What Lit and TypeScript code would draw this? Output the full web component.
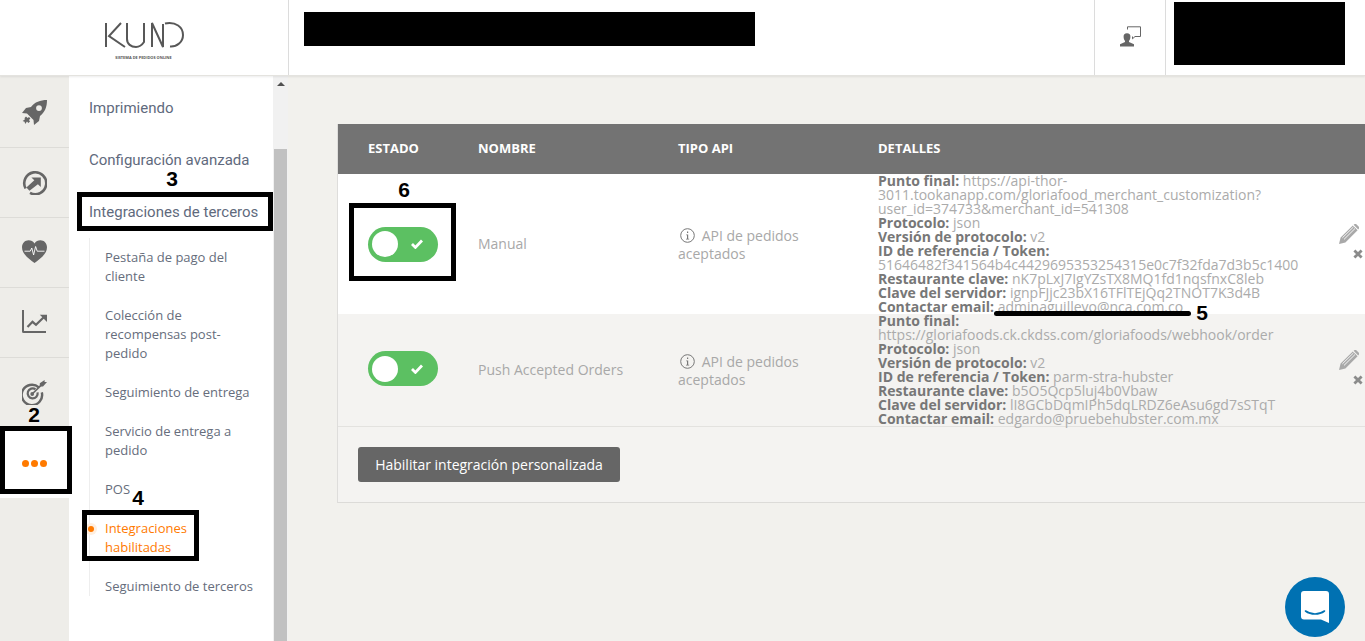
import { LitElement, html, css, svg } from "lit";
import { customElement } from "lit/decorators.js";

const railIcons = [
  svg`<path fill-rule="evenodd" d="M25 0C18 0 13 2 9 7L4 8L0 13L5 13.5L11.5 20L12 25L17 21L18 16C23 12 25 7 25 0ZM17 5.2a2.9 2.9 0 1 1 0 5.8a2.9 2.9 0 1 1 0-5.8Z"/><path d="M4 16.5L5.600 18L7 17L8.400 18.600L7 20L8 21.400L6.400 23L5 21.600L3.200 24L2.600 21.800L.6 21L2.800 19.600L2.600 18Z"/>`,
  svg`<path fill="none" stroke-width="2.600" d="M3.600 18.500A11 11 0 1 1 8 22.900"/><path d="M7.500 20.800L4.400 17.400L12.300 10.200L9.400 7.500H18.800V17L15.900 14.200Z"/>`,
  svg`<path d="M12.500 23C8 19.500 0 14.500 0 7.200C0 3 3 .2 6.600 .2C9 .2 11.200 1.400 12.500 3.400C13.800 1.400 16 .2 18.400 .2C22 .2 25 3 25 7.200C25 14.500 17 19.500 12.500 23Z"/><path fill="none" stroke="#fff" stroke-width=".9" d="M2.500 11.200H8.200L9.800 8L11.600 15L13.600 6.500L15.200 11.200H22.500"/>`,
  svg`<path fill="none" stroke-width="2" d="M1 0V21.500Q1 22 1.500 22H24"/><path fill="none" stroke-width="2.200" d="M5.500 17L10.500 11.800L14 14.800L21.500 7.500"/><path d="M17.800 4.800H25V12Z"/>`,
  svg`<path fill="none" stroke-width="2.400" d="M16.800 7.400A10.200 10.200 0 1 0 19.800 12.400"/><path fill="none" stroke-width="2.200" d="M13.500 9.200A5 5 0 1 0 15.600 12.400"/><circle cx="10.200" cy="14" r="1.900"/><path fill="none" stroke-width="1.700" d="M10.200 14L21 3.400"/><path d="M17.800 3.200L22.600 0V2L25 2L21 6.400L17.800 6.400Z"/>`,
];

@customElement("app-root")
export class AppRoot extends LitElement {
  static styles = css`
    :host { display: block; position: relative; width: 1365px; height: 641px; overflow: hidden; background: #f2f1ed; font-family: "Open Sans", sans-serif; color: #777; }
    * { box-sizing: border-box; }
    .top { display: flex; height: 76px; background: #fff; border-bottom: 1px solid #e4e3df; box-shadow: 0 1px 2px rgba(0,0,0,.08); position: relative; z-index: 1; }
    .logo { width: 289px; border-right: 1px solid #dcdcdc; display: flex; flex-direction: column; align-items: center; padding: 22px 1px 0 0; }
    .logo svg { display: block; }
    .tag { font: 700 3.9px/6px "Open Sans", sans-serif; color: #555; white-space: nowrap; margin-top: 7px; }
    .title { width: 806px; padding: 12px 0 0 15px; border-right: 1px solid #dcdcdc; }
    .redact-a { width: 451px; height: 34px; background: #000; }
    .chatcell { width: 71px; border-right: 1px solid #dcdcdc; display: flex; align-items: center; justify-content: center; padding-bottom: 2px; }
    .usercell { padding: 2px 0 0 8px; }
    .redact-b { width: 171px; height: 63px; background: #000; }
    .body { display: flex; height: 565px; }
    .rail { width: 69px; background: #eeede9; padding-top: 2px; flex: none; }
    .rail-item { height: 70px; border-bottom: 1px solid #dddcd8; display: flex; align-items: center; justify-content: center; }
    .rail-item svg { width: 25px; height: 25px; fill: #666; stroke: #666; stroke-width: 0; }
    .rail-item.active { background: #fff; border-bottom: none; }
    .dots { display: flex; gap: 2px; }
    .dots i { width: 7px; height: 7px; border-radius: 50%; background: #ff7a00; }
    .menu { width: 204px; background: #fff; padding-top: 6px; flex: none; }
    .menu-top { height: 52px; padding-left: 20px; display: flex; align-items: center; font: 400 15px "Roboto", sans-serif; color: #5f6a7d; }
    .sub { margin-left: 20px; width: 165px; border-left: 1px solid #eee; padding: 10px 0 0 15px; display: flex; flex-direction: column; gap: 20px; height: 358px; }
    .sub div { font-size: 13px; line-height: 19px; color: #666d7c; position: relative; }
    .sub .on { color: #ff7a00; }
    .sub .on::before { content: ""; position: absolute; left: -20px; top: 3.5px; width: 12px; height: 12px; border-radius: 50%; background: #ffefe0; }
    .sub .on::after { content: ""; position: absolute; left: -17px; top: 6.5px; width: 6px; height: 6px; border-radius: 50%; background: #ff7a00; }
    .bar { width: 15px; background: #f1f1f1; flex: none; display: flex; flex-direction: column; align-items: center; }
    .arrow { width: 0; height: 0; margin: 6px 0 0; border: 4px solid transparent; border-top: 0; border-bottom: 4px solid #505050; }
    .thumb { margin-top: 63px; width: 13px; flex: 1; background: #c1c1c1; }
    .main { flex: 1; padding: 48px 0 0 49px; min-width: 0; }
    .card { border-left: 1px solid #dedddb; border-bottom: 1px solid #dcdbd8; background: #f4f3f1; }
    .row { display: grid; grid-template-columns: 140px 200px 200px 460px 27px; }
    .head { height: 50px; background: #737373; align-items: center; font-size: 13px; font-weight: 700; color: #fff; padding-bottom: 2px; }
    .head div:first-child { padding-left: 30px; }
    .r1 { background: #fff; height: 140px; align-items: center; }
    .r2 { background: #f4f3f1; height: 113px; border-bottom: 1px solid #e3e2df; align-items: center; }
    .sw-cell { padding-left: 30px; display: flex; }
    .r2 .sw-cell { padding-bottom: 3px; }
    .sw { width: 70px; height: 35px; border-radius: 18px; background: #5cc062; display: flex; align-items: center; padding: 0 15px 0 4px; justify-content: space-between; }
    .knob { width: 26px; height: 26px; border-radius: 50%; background: #fff; }
    .name { font-size: 14px; line-height: 18px; color: #a8a8a8; }
    .api { font-size: 14px; line-height: 18px; color: #a8a8a8; padding: 2px 40px 0 0; }
    .api svg { vertical-align: -2px; margin: 0 3px 0 2px; }
    .det { align-self: start; font-size: 14px; line-height: 14px; color: #ababab; }
    .det b { color: #777; font-weight: 700; }
    .acts { align-self: start; display: flex; flex-direction: column; align-items: flex-end; }
    .r1 .acts { padding-top: 50px; }
    .r2 .acts { padding-top: 36px; }
    .acts .pen { margin-right: 6px; }
    .acts .x { margin: 5px 2px 0 0; }
    .foot { padding: 20px 0 20px 20px; height: 75px; }
    .btn { display: inline-flex; height: 35px; width: 262px; align-items: center; justify-content: center; border-radius: 3px; background: #666; color: #fff; font: 500 14px "Open Sans", sans-serif; border: 0; padding: 0; }
    .chat { position: absolute; left: 1285px; top: 577px; width: 60px; height: 60px; border-radius: 50%; background: #0071b2; display: flex; align-items: center; justify-content: center; }
    .box { position: absolute; border: 5px solid #000; z-index: 2; }
    .b2 { left: 0; top: 426px; width: 72px; height: 68px; }
    .b3 { left: 77px; top: 192px; width: 196px; height: 39px; }
    .b4 { left: 82px; top: 510px; width: 117px; height: 51px; }
    .b6 { left: 349px; top: 203px; width: 107px; height: 78px; }
    .line { position: absolute; left: 994px; top: 311px; width: 197px; height: 5px; border-radius: 3px; background: #000; z-index: 2; }
    .num { position: absolute; font: 700 21px/24px "Liberation Sans", sans-serif; color: #000; z-index: 2; width: 20px; text-align: center; }
    .n2 { left: 24px; top: 403px; }
    .n3 { left: 162px; top: 167px; }
    .n4 { left: 128px; top: 486px; }
    .n5 { left: 1192px; top: 301px; }
    .n6 { left: 394px; top: 178px; }
  `;

  private sw() {
    return html`<div class="sw"><span class="knob"></span>
      <svg width="12" height="10" viewBox="0 0 12 10"><path d="M1 5L4.400 8.400L11 1.600" fill="none" stroke="#fff" stroke-width="2.800"/></svg></div>`;
  }
  private info() {
    return html`<svg width="15" height="15" viewBox="0 0 15 15"><circle cx="7.500" cy="7.500" r="6.800" fill="none" stroke="#777" stroke-width="1"/><path d="M6.200 6.400H8.200V10.800H9.200V11.600H6V10.800H7V7.200H6.200ZM7 3.400H8.200V5H7Z" fill="#777"/></svg>`;
  }
  private acts() {
    return html`<div class="acts">
      <svg class="pen" width="20" height="20" viewBox="0 0 20 20"><path fill="#a9a9a9" d="M0 20L1.600 13.600L13.800 1.400L18.600 6.200L6.400 18.400ZM15 .4C16 -.4 17 -.2 17.600 .4L19.600 2.400C20.200 3 20.300 4 19.600 5L19.200 5.400L14.600 .8Z"/><path fill="none" stroke="#fff" stroke-width=".9" d="M3.400 13.800L14.400 3M5 15.400L16 4.500"/></svg>
      <svg class="x" width="10" height="10" viewBox="0 0 10 10"><path d="M1.400 1.400L8.600 8.600M8.600 1.400L1.400 8.600" stroke="#8b8b8b" stroke-width="2.800"/></svg>
    </div>`;
  }

  render() {
    const subs = ["Pestaña de pago del cliente", "Colección de recompensas post-pedido", "Seguimiento de entrega", "Servicio de entrega a pedido", "POS"];
    return html`
      <div class="top">
        <div class="logo">
          <svg width="80" height="26" viewBox="0 0 80 26" fill="none" stroke="#585858" stroke-width="2">
            <path d="M2 1V25"/><path d="M17 1L5 14L21 25"/>
            <path d="M23 1V17C23 22 27 25 32 25C35 25 38 23 40 20V1"/>
            <path d="M48 25V1L59 25V2"/>
            <path d="M61 1.500C72 -.5 79 5 79 13C79 20 73 25 66 24.500"/>
          </svg>
          <div class="tag">SISTEMA DE PEDIDOS ONLINE</div>
        </div>
        <div class="title"><div class="redact-a"></div></div>
        <div class="chatcell">
          <svg width="21" height="21" viewBox="0 0 21 21"><path fill="#666" d="M7 7.200a3.400 3.400 0 0 1 3.400 3.600C10.400 13 9.500 14.300 9 15V16L14 18.200V20.500H0V18.200L5 16V15C4.500 14.300 3.600 13 3.600 10.800A3.400 3.400 0 0 1 7 7.200Z"/><path fill="none" stroke="#666" stroke-width="1" d="M7.500 3.500V.8H20.500V10.500H15L12.500 12.800V10.500"/></svg>
        </div>
        <div class="usercell"><div class="redact-b"></div></div>
      </div>
      <div class="body">
        <div class="rail">
          ${railIcons.map((ic) => html`<div class="rail-item"><svg viewBox="0 0 25 25">${ic}</svg></div>`)}
          <div class="rail-item active"><span class="dots"><i></i><i></i><i></i></span></div>
        </div>
        <div class="menu">
          <div class="menu-top">Imprimiendo</div>
          <div class="menu-top">Configuración avanzada</div>
          <div class="menu-top">Integraciones de terceros</div>
          <div class="sub">
            ${subs.map((s) => html`<div>${s}</div>`)}
            <div class="on">Integraciones habilitadas</div>
            <div>Seguimiento de terceros</div>
          </div>
        </div>
        <div class="bar"><span class="arrow"></span><span class="thumb"></span></div>
        <div class="main">
          <div class="card">
            <div class="row head"><div>ESTADO</div><div>NOMBRE</div><div>TIPO API</div><div>DETALLES</div></div>
            <div class="row r1">
              <div class="sw-cell">${this.sw()}</div>
              <div class="name">Manual</div>
              <div class="api">${this.info()} API de pedidos aceptados</div>
              <div class="det"><b>Punto final:</b> https://api-thor-3011.tookanapp.com/gloriafood_merchant_customization?user_id=374733&merchant_id=541308<br>
                <b>Protocolo:</b> json<br><b>Versión de protocolo:</b> v2<br>
                <b>ID de referencia / Token:</b> 51646482f341564b4c4429695353254315e0c7f32fda7d3b5c1400<br>
                <b>Restaurante clave:</b> nK7pLxJ7IgYZsTX8MQ1fd1nqsfnxC8leb<br>
                <b>Clave del servidor:</b> ignpFJjc23bX16TFlTEjQq2TNOT7K3d4B<br>
                <b>Contactar email:</b> adminaguillevo@nca.com.co</div>
              ${this.acts()}
            </div>
            <div class="row r2">
              <div class="sw-cell">${this.sw()}</div>
              <div class="name">Push Accepted Orders</div>
              <div class="api">${this.info()} API de pedidos aceptados</div>
              <div class="det"><b>Punto final:</b> https://gloriafoods.ck.ckdss.com/gloriafoods/webhook/order<br>
                <b>Protocolo:</b> json<br><b>Versión de protocolo:</b> v2<br>
                <b>ID de referencia / Token:</b> parm-stra-hubster<br>
                <b>Restaurante clave:</b> b5O5Qcp5luj4b0Vbaw<br>
                <b>Clave del servidor:</b> lI8GCbDqmIPh5dqLRDZ6eAsu6gd7sSTqT<br>
                <b>Contactar email:</b> edgardo@pruebehubster.com.mx</div>
              ${this.acts()}
            </div>
            <div class="foot"><button class="btn">Habilitar integración personalizada</button></div>
          </div>
        </div>
      </div>
      <div class="chat">
        <svg width="28" height="33" viewBox="0 0 28 33"><path fill="#fff" d="M3 0H25A3 3 0 0 1 28 3V32L20 28.500H3A3 3 0 0 1 0 25.500V3A3 3 0 0 1 3 0Z"/><path fill="none" stroke="#0071b2" stroke-width="1.600" stroke-linecap="round" d="M4.500 20C10 24 18 24 23.500 20"/></svg>
      </div>
      <div class="box b2"></div><div class="box b3"></div><div class="box b4"></div><div class="box b6"></div>
      <div class="line"></div>
      <span class="num n2">2</span><span class="num n3">3</span><span class="num n4">4</span><span class="num n5">5</span><span class="num n6">6</span>
    `;
  }
}
